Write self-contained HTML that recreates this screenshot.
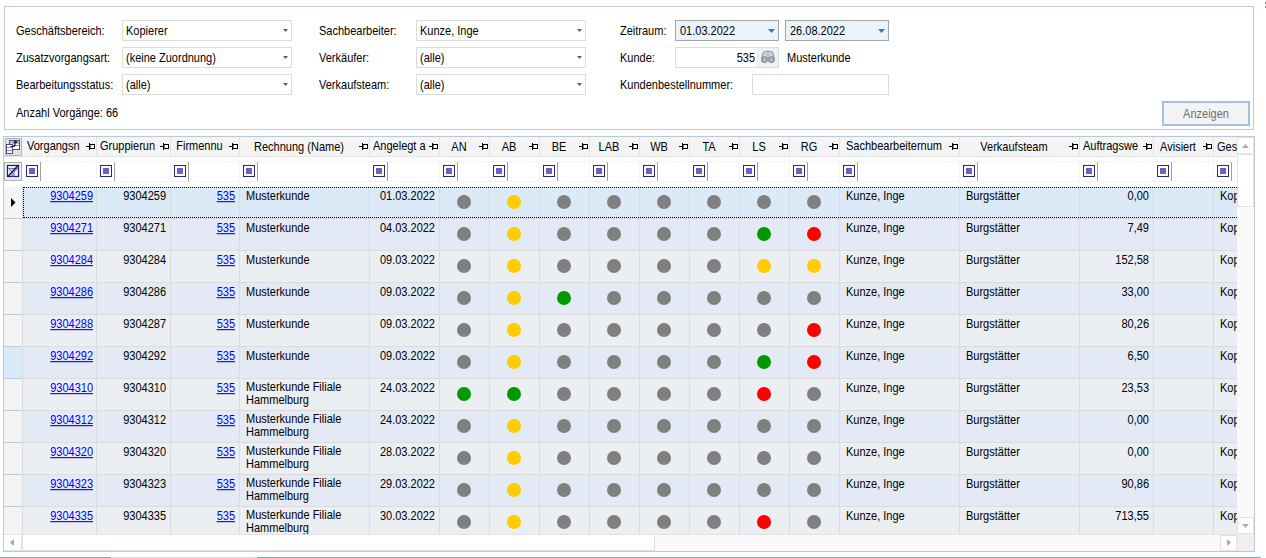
<!DOCTYPE html><html><head><meta charset="utf-8"><style>
html,body{margin:0;padding:0;}
body{width:1266px;height:558px;overflow:hidden;position:relative;background:#fff;font-family:"Liberation Sans", sans-serif;font-size:11px;color:#000;}
div{position:absolute;box-sizing:border-box;}
.t{white-space:nowrap;line-height:13px;transform:scaleY(1.1);transform-origin:0 10px;}
.r{text-align:right;}
a{color:#0000ff;text-decoration:underline;}

</style></head><body>
<div style="left:4px;top:6px;width:1250px;height:124px;border:1px solid #bccadb;"></div>
<div class="t" style="left:16px;top:25px;">Geschäftsbereich:</div>
<div style="left:122px;top:20px;width:170px;height:21px;border:1px solid #dcdcdc;background:#fff;"></div>
<div class="t" style="left:126px;top:25px;">Kopierer</div>
<svg style="position:absolute;left:283px;top:29px" width="5" height="3"><path d="M0 0H5L2.5 3Z" fill="#606060"/></svg>
<div class="t" style="left:16px;top:52px;">Zusatzvorgangsart:</div>
<div style="left:122px;top:47px;width:170px;height:21px;border:1px solid #dcdcdc;background:#fff;"></div>
<div class="t" style="left:126px;top:52px;">(keine Zuordnung)</div>
<svg style="position:absolute;left:283px;top:56px" width="5" height="3"><path d="M0 0H5L2.5 3Z" fill="#606060"/></svg>
<div class="t" style="left:16px;top:79px;">Bearbeitungsstatus:</div>
<div style="left:122px;top:74px;width:170px;height:21px;border:1px solid #dcdcdc;background:#fff;"></div>
<div class="t" style="left:126px;top:79px;">(alle)</div>
<svg style="position:absolute;left:283px;top:83px" width="5" height="3"><path d="M0 0H5L2.5 3Z" fill="#606060"/></svg>
<div class="t" style="left:16px;top:107px;">Anzahl Vorgänge: 66</div>
<div class="t" style="left:319px;top:25px;">Sachbearbeiter:</div>
<div style="left:416px;top:20px;width:170px;height:21px;border:1px solid #dcdcdc;background:#fff;"></div>
<div class="t" style="left:420px;top:25px;">Kunze, Inge</div>
<svg style="position:absolute;left:577px;top:29px" width="5" height="3"><path d="M0 0H5L2.5 3Z" fill="#606060"/></svg>
<div class="t" style="left:319px;top:52px;">Verkäufer:</div>
<div style="left:416px;top:47px;width:170px;height:21px;border:1px solid #dcdcdc;background:#fff;"></div>
<div class="t" style="left:420px;top:52px;">(alle)</div>
<svg style="position:absolute;left:577px;top:56px" width="5" height="3"><path d="M0 0H5L2.5 3Z" fill="#606060"/></svg>
<div class="t" style="left:319px;top:79px;">Verkaufsteam:</div>
<div style="left:416px;top:74px;width:170px;height:21px;border:1px solid #dcdcdc;background:#fff;"></div>
<div class="t" style="left:420px;top:79px;">(alle)</div>
<svg style="position:absolute;left:577px;top:83px" width="5" height="3"><path d="M0 0H5L2.5 3Z" fill="#606060"/></svg>
<div class="t" style="left:620px;top:25px;">Zeitraum:</div>
<div style="left:675px;top:20px;width:104px;height:21px;border:1px solid #a5a5a5;background:#eaf2fb;"></div>
<div class="t" style="left:680px;top:25px;">01.03.2022</div>
<svg style="position:absolute;left:768px;top:29px" width="7" height="4"><path d="M0 0H7L3.5 4Z" fill="#4a74b0"/></svg>
<div style="left:785px;top:20px;width:104px;height:21px;border:1px solid #a5a5a5;background:#eaf2fb;"></div>
<div class="t" style="left:790px;top:25px;">26.08.2022</div>
<svg style="position:absolute;left:878px;top:29px" width="7" height="4"><path d="M0 0H7L3.5 4Z" fill="#4a74b0"/></svg>
<div class="t" style="left:620px;top:52px;">Kunde:</div>
<div style="left:675px;top:47px;width:104px;height:21px;border:1px solid #dcdcdc;background:#fff;"></div>
<div style="left:757px;top:48px;width:21px;height:19px;background:#eaf2fb;border-left:1px solid #e3e9f1;"></div>
<div class="t" style="left:700px;top:52px;width:55px;text-align:right;">535</div>
<svg style="position:absolute;left:760px;top:50px" width="16" height="14" viewBox="0 0 16 14">
<path d="M1.8 9 L2.8 3.5 Q3.5 1.5 5.5 1.5 L6.5 1.5 Q8 0.5 9.5 1.5 L10.5 1.5 Q12.5 1.5 13.2 3.5 L14.2 9 Z" fill="#d2d2d2" stroke="#8c8c8c" stroke-width="1"/>
<path d="M8 2.5 V8" stroke="#b0b0b0" stroke-width="1"/>
<circle cx="4.5" cy="9.6" r="2.9" fill="#9fbad2" stroke="#8a8a8a" stroke-width="1.1"/>
<circle cx="11.5" cy="9.6" r="2.9" fill="#9fbad2" stroke="#8a8a8a" stroke-width="1.1"/>
</svg>
<div class="t" style="left:787px;top:52px;">Musterkunde</div>
<div class="t" style="left:620px;top:79px;">Kundenbestellnummer:</div>
<div style="left:752px;top:74px;width:137px;height:21px;border:1px solid #dcdcdc;background:#fff;"></div>
<div style="left:1162px;top:101px;width:88px;height:25px;border:2px solid #a9bfdd;background:#f3f3f3;"></div>
<div class="t" style="left:1162px;top:108px;width:88px;text-align:center;color:#6d6d6d;">Anzeigen</div>
<div style="left:1265px;top:2px;width:1px;height:2px;background:#8a8a8a;"></div>
<div style="left:1265px;top:6px;width:1px;height:2px;background:#8a8a8a;"></div>
<div style="left:3px;top:136px;width:1252px;height:416px;border:1px solid #b9c9dc;background:#fff;"></div>
<div style="left:4px;top:137px;width:1233px;height:397px;overflow:hidden;">
<div style="left:0px;top:0px;width:1233px;height:19px;background:#f4f4f4;"></div>
<div style="left:0px;top:19px;width:1233px;height:1px;background:#e6e6e6;"></div>
<div style="left:18px;top:24px;width:1215px;height:1px;background:#f1f5fa;"></div>
<div style="left:18px;top:44px;width:1215px;height:1px;background:#f1f5fa;"></div>
<div style="left:1px;top:1px;width:17px;height:18px;background:#e2e2e2;border:1px solid #b4b4b4;"></div>
<div style="left:0px;top:25px;width:18px;height:19px;background:#ececec;border:1px solid #b0b0b0;"></div>
<svg style="position:absolute;left:1px;top:1px" width="18" height="18" viewBox="5 138 18 18" shape-rendering="crispEdges">
<rect x="9" y="140" width="11" height="10" fill="#fff"/>
<rect x="10" y="141" width="9" height="3" fill="#c0c0ea"/>
<rect x="9.5" y="140.5" width="10" height="9" fill="none" stroke="#4c4c94"/>
<path d="M10 145.5H19" stroke="#8a8acc"/>
<rect x="6" y="144" width="7" height="10" fill="#fff"/>
<rect x="6.5" y="144.5" width="6" height="9" fill="none" stroke="#4c4c94"/>
<path d="M7 147.5H12M7 150.5H12" stroke="#8a8acc"/>
</svg>
<svg style="position:absolute;left:1px;top:1px" width="18" height="18" viewBox="5 138 18 18">
<path d="M10.5 146.5 H13.5 Q15 146.5 15 144 V142.5" fill="none" stroke="#111" stroke-width="1.2"/>
<path d="M13 143 L15.5 140 L18 143 Z" fill="#222"/>
</svg>
<svg style="position:absolute;left:0px;top:25px" width="20" height="20" viewBox="4 162 20 20">
<rect x="7.5" y="165.5" width="11" height="11" fill="#f3f3e6" stroke="#1e1e6e" stroke-width="1.2"/>
<path d="M8.5 168.5 H17.5 L14 172 V176 H12 V172 Z" fill="#d6d6f6" stroke="#6a6ad8" stroke-width="1"/>
<path d="M8 176.5 L18.5 165" stroke="#15154a" stroke-width="1.4"/>
</svg>
<div style="left:92px;top:0px;width:1px;height:19px;background:#e3e3e3;"></div>
<svg style="position:absolute;left:82px;top:6px" width="9" height="7"><path d="M0 3.5H3.5" stroke="#000" stroke-width="1"/><path d="M3.5 0V7" stroke="#000" stroke-width="1"/><rect x="4" y="1.5" width="4.5" height="4" fill="#fff" stroke="#000" stroke-width="1"/></svg>
<div class="t" style="left:23px;top:3px;width:59px;overflow:hidden;">Vorgangsn</div>
<div style="left:22px;top:28px;width:12px;height:12px;border:1px solid #2b2b6e;background:#fff;"><div style="left:2px;top:2px;width:6px;height:6px;background:#6464cc;"></div></div>
<div style="left:36px;top:25px;width:1px;height:19px;background:#a0a0a0;"></div>
<div style="left:92px;top:24px;width:1px;height:21px;background:#f1f5fa;"></div>
<div style="left:166px;top:0px;width:1px;height:19px;background:#e3e3e3;"></div>
<svg style="position:absolute;left:156px;top:6px" width="9" height="7"><path d="M0 3.5H3.5" stroke="#000" stroke-width="1"/><path d="M3.5 0V7" stroke="#000" stroke-width="1"/><rect x="4" y="1.5" width="4.5" height="4" fill="#fff" stroke="#000" stroke-width="1"/></svg>
<div class="t" style="left:96px;top:3px;width:60px;overflow:hidden;">Gruppierun</div>
<div style="left:96px;top:28px;width:12px;height:12px;border:1px solid #2b2b6e;background:#fff;"><div style="left:2px;top:2px;width:6px;height:6px;background:#6464cc;"></div></div>
<div style="left:110px;top:25px;width:1px;height:19px;background:#a0a0a0;"></div>
<div style="left:166px;top:24px;width:1px;height:21px;background:#f1f5fa;"></div>
<div style="left:235px;top:0px;width:1px;height:19px;background:#e3e3e3;"></div>
<svg style="position:absolute;left:225px;top:6px" width="9" height="7"><path d="M0 3.5H3.5" stroke="#000" stroke-width="1"/><path d="M3.5 0V7" stroke="#000" stroke-width="1"/><rect x="4" y="1.5" width="4.5" height="4" fill="#fff" stroke="#000" stroke-width="1"/></svg>
<div class="t" style="left:166px;top:3px;width:59px;text-align:center;overflow:hidden;">Firmennu</div>
<div style="left:170px;top:28px;width:12px;height:12px;border:1px solid #2b2b6e;background:#fff;"><div style="left:2px;top:2px;width:6px;height:6px;background:#6464cc;"></div></div>
<div style="left:184px;top:25px;width:1px;height:19px;background:#a0a0a0;"></div>
<div style="left:235px;top:24px;width:1px;height:21px;background:#f1f5fa;"></div>
<div style="left:365px;top:0px;width:1px;height:19px;background:#e3e3e3;"></div>
<svg style="position:absolute;left:355px;top:6px" width="9" height="7"><path d="M0 3.5H3.5" stroke="#000" stroke-width="1"/><path d="M3.5 0V7" stroke="#000" stroke-width="1"/><rect x="4" y="1.5" width="4.5" height="4" fill="#fff" stroke="#000" stroke-width="1"/></svg>
<div class="t" style="left:235px;top:4px;width:120px;text-align:center;overflow:hidden;">Rechnung (Name)</div>
<div style="left:239px;top:28px;width:12px;height:12px;border:1px solid #2b2b6e;background:#fff;"><div style="left:2px;top:2px;width:6px;height:6px;background:#6464cc;"></div></div>
<div style="left:253px;top:25px;width:1px;height:19px;background:#a0a0a0;"></div>
<div style="left:365px;top:24px;width:1px;height:21px;background:#f1f5fa;"></div>
<div style="left:435px;top:0px;width:1px;height:19px;background:#e3e3e3;"></div>
<svg style="position:absolute;left:425px;top:6px" width="9" height="7"><path d="M0 3.5H3.5" stroke="#000" stroke-width="1"/><path d="M3.5 0V7" stroke="#000" stroke-width="1"/><rect x="4" y="1.5" width="4.5" height="4" fill="#fff" stroke="#000" stroke-width="1"/></svg>
<div class="t" style="left:369px;top:3px;width:56px;overflow:hidden;">Angelegt a</div>
<div style="left:369px;top:28px;width:12px;height:12px;border:1px solid #2b2b6e;background:#fff;"><div style="left:2px;top:2px;width:6px;height:6px;background:#6464cc;"></div></div>
<div style="left:383px;top:25px;width:1px;height:19px;background:#a0a0a0;"></div>
<div style="left:435px;top:24px;width:1px;height:21px;background:#f1f5fa;"></div>
<div style="left:485px;top:0px;width:1px;height:19px;background:#e3e3e3;"></div>
<svg style="position:absolute;left:475px;top:6px" width="9" height="7"><path d="M0 3.5H3.5" stroke="#000" stroke-width="1"/><path d="M3.5 0V7" stroke="#000" stroke-width="1"/><rect x="4" y="1.5" width="4.5" height="4" fill="#fff" stroke="#000" stroke-width="1"/></svg>
<div class="t" style="left:435px;top:4px;width:40px;text-align:center;overflow:hidden;">AN</div>
<div style="left:439px;top:28px;width:12px;height:12px;border:1px solid #2b2b6e;background:#fff;"><div style="left:2px;top:2px;width:6px;height:6px;background:#6464cc;"></div></div>
<div style="left:453px;top:25px;width:1px;height:19px;background:#a0a0a0;"></div>
<div style="left:485px;top:24px;width:1px;height:21px;background:#f1f5fa;"></div>
<div style="left:535px;top:0px;width:1px;height:19px;background:#e3e3e3;"></div>
<svg style="position:absolute;left:525px;top:6px" width="9" height="7"><path d="M0 3.5H3.5" stroke="#000" stroke-width="1"/><path d="M3.5 0V7" stroke="#000" stroke-width="1"/><rect x="4" y="1.5" width="4.5" height="4" fill="#fff" stroke="#000" stroke-width="1"/></svg>
<div class="t" style="left:485px;top:4px;width:40px;text-align:center;overflow:hidden;">AB</div>
<div style="left:489px;top:28px;width:12px;height:12px;border:1px solid #2b2b6e;background:#fff;"><div style="left:2px;top:2px;width:6px;height:6px;background:#6464cc;"></div></div>
<div style="left:503px;top:25px;width:1px;height:19px;background:#a0a0a0;"></div>
<div style="left:535px;top:24px;width:1px;height:21px;background:#f1f5fa;"></div>
<div style="left:585px;top:0px;width:1px;height:19px;background:#e3e3e3;"></div>
<svg style="position:absolute;left:575px;top:6px" width="9" height="7"><path d="M0 3.5H3.5" stroke="#000" stroke-width="1"/><path d="M3.5 0V7" stroke="#000" stroke-width="1"/><rect x="4" y="1.5" width="4.5" height="4" fill="#fff" stroke="#000" stroke-width="1"/></svg>
<div class="t" style="left:535px;top:4px;width:40px;text-align:center;overflow:hidden;">BE</div>
<div style="left:539px;top:28px;width:12px;height:12px;border:1px solid #2b2b6e;background:#fff;"><div style="left:2px;top:2px;width:6px;height:6px;background:#6464cc;"></div></div>
<div style="left:553px;top:25px;width:1px;height:19px;background:#a0a0a0;"></div>
<div style="left:585px;top:24px;width:1px;height:21px;background:#f1f5fa;"></div>
<div style="left:635px;top:0px;width:1px;height:19px;background:#e3e3e3;"></div>
<svg style="position:absolute;left:625px;top:6px" width="9" height="7"><path d="M0 3.5H3.5" stroke="#000" stroke-width="1"/><path d="M3.5 0V7" stroke="#000" stroke-width="1"/><rect x="4" y="1.5" width="4.5" height="4" fill="#fff" stroke="#000" stroke-width="1"/></svg>
<div class="t" style="left:585px;top:4px;width:40px;text-align:center;overflow:hidden;">LAB</div>
<div style="left:589px;top:28px;width:12px;height:12px;border:1px solid #2b2b6e;background:#fff;"><div style="left:2px;top:2px;width:6px;height:6px;background:#6464cc;"></div></div>
<div style="left:603px;top:25px;width:1px;height:19px;background:#a0a0a0;"></div>
<div style="left:635px;top:24px;width:1px;height:21px;background:#f1f5fa;"></div>
<div style="left:685px;top:0px;width:1px;height:19px;background:#e3e3e3;"></div>
<svg style="position:absolute;left:675px;top:6px" width="9" height="7"><path d="M0 3.5H3.5" stroke="#000" stroke-width="1"/><path d="M3.5 0V7" stroke="#000" stroke-width="1"/><rect x="4" y="1.5" width="4.5" height="4" fill="#fff" stroke="#000" stroke-width="1"/></svg>
<div class="t" style="left:635px;top:4px;width:40px;text-align:center;overflow:hidden;">WB</div>
<div style="left:639px;top:28px;width:12px;height:12px;border:1px solid #2b2b6e;background:#fff;"><div style="left:2px;top:2px;width:6px;height:6px;background:#6464cc;"></div></div>
<div style="left:653px;top:25px;width:1px;height:19px;background:#a0a0a0;"></div>
<div style="left:685px;top:24px;width:1px;height:21px;background:#f1f5fa;"></div>
<div style="left:735px;top:0px;width:1px;height:19px;background:#e3e3e3;"></div>
<svg style="position:absolute;left:725px;top:6px" width="9" height="7"><path d="M0 3.5H3.5" stroke="#000" stroke-width="1"/><path d="M3.5 0V7" stroke="#000" stroke-width="1"/><rect x="4" y="1.5" width="4.5" height="4" fill="#fff" stroke="#000" stroke-width="1"/></svg>
<div class="t" style="left:685px;top:4px;width:40px;text-align:center;overflow:hidden;">TA</div>
<div style="left:689px;top:28px;width:12px;height:12px;border:1px solid #2b2b6e;background:#fff;"><div style="left:2px;top:2px;width:6px;height:6px;background:#6464cc;"></div></div>
<div style="left:703px;top:25px;width:1px;height:19px;background:#a0a0a0;"></div>
<div style="left:735px;top:24px;width:1px;height:21px;background:#f1f5fa;"></div>
<div style="left:785px;top:0px;width:1px;height:19px;background:#e3e3e3;"></div>
<svg style="position:absolute;left:775px;top:6px" width="9" height="7"><path d="M0 3.5H3.5" stroke="#000" stroke-width="1"/><path d="M3.5 0V7" stroke="#000" stroke-width="1"/><rect x="4" y="1.5" width="4.5" height="4" fill="#fff" stroke="#000" stroke-width="1"/></svg>
<div class="t" style="left:735px;top:4px;width:40px;text-align:center;overflow:hidden;">LS</div>
<div style="left:739px;top:28px;width:12px;height:12px;border:1px solid #2b2b6e;background:#fff;"><div style="left:2px;top:2px;width:6px;height:6px;background:#6464cc;"></div></div>
<div style="left:753px;top:25px;width:1px;height:19px;background:#a0a0a0;"></div>
<div style="left:785px;top:24px;width:1px;height:21px;background:#f1f5fa;"></div>
<div style="left:835px;top:0px;width:1px;height:19px;background:#e3e3e3;"></div>
<svg style="position:absolute;left:825px;top:6px" width="9" height="7"><path d="M0 3.5H3.5" stroke="#000" stroke-width="1"/><path d="M3.5 0V7" stroke="#000" stroke-width="1"/><rect x="4" y="1.5" width="4.5" height="4" fill="#fff" stroke="#000" stroke-width="1"/></svg>
<div class="t" style="left:785px;top:4px;width:40px;text-align:center;overflow:hidden;">RG</div>
<div style="left:789px;top:28px;width:12px;height:12px;border:1px solid #2b2b6e;background:#fff;"><div style="left:2px;top:2px;width:6px;height:6px;background:#6464cc;"></div></div>
<div style="left:803px;top:25px;width:1px;height:19px;background:#a0a0a0;"></div>
<div style="left:835px;top:24px;width:1px;height:21px;background:#f1f5fa;"></div>
<div style="left:955px;top:0px;width:1px;height:19px;background:#e3e3e3;"></div>
<svg style="position:absolute;left:945px;top:6px" width="9" height="7"><path d="M0 3.5H3.5" stroke="#000" stroke-width="1"/><path d="M3.5 0V7" stroke="#000" stroke-width="1"/><rect x="4" y="1.5" width="4.5" height="4" fill="#fff" stroke="#000" stroke-width="1"/></svg>
<div class="t" style="left:835px;top:3px;width:110px;text-align:center;overflow:hidden;">Sachbearbeiternum</div>
<div style="left:839px;top:28px;width:12px;height:12px;border:1px solid #2b2b6e;background:#fff;"><div style="left:2px;top:2px;width:6px;height:6px;background:#6464cc;"></div></div>
<div style="left:853px;top:25px;width:1px;height:19px;background:#a0a0a0;"></div>
<div style="left:955px;top:24px;width:1px;height:21px;background:#f1f5fa;"></div>
<div style="left:1075px;top:0px;width:1px;height:19px;background:#e3e3e3;"></div>
<svg style="position:absolute;left:1065px;top:6px" width="9" height="7"><path d="M0 3.5H3.5" stroke="#000" stroke-width="1"/><path d="M3.5 0V7" stroke="#000" stroke-width="1"/><rect x="4" y="1.5" width="4.5" height="4" fill="#fff" stroke="#000" stroke-width="1"/></svg>
<div class="t" style="left:955px;top:4px;width:110px;text-align:center;overflow:hidden;">Verkaufsteam</div>
<div style="left:959px;top:28px;width:12px;height:12px;border:1px solid #2b2b6e;background:#fff;"><div style="left:2px;top:2px;width:6px;height:6px;background:#6464cc;"></div></div>
<div style="left:973px;top:25px;width:1px;height:19px;background:#a0a0a0;"></div>
<div style="left:1075px;top:24px;width:1px;height:21px;background:#f1f5fa;"></div>
<div style="left:1149px;top:0px;width:1px;height:19px;background:#e3e3e3;"></div>
<svg style="position:absolute;left:1139px;top:6px" width="9" height="7"><path d="M0 3.5H3.5" stroke="#000" stroke-width="1"/><path d="M3.5 0V7" stroke="#000" stroke-width="1"/><rect x="4" y="1.5" width="4.5" height="4" fill="#fff" stroke="#000" stroke-width="1"/></svg>
<div class="t" style="left:1079px;top:3px;width:60px;overflow:hidden;">Auftragswe</div>
<div style="left:1079px;top:28px;width:12px;height:12px;border:1px solid #2b2b6e;background:#fff;"><div style="left:2px;top:2px;width:6px;height:6px;background:#6464cc;"></div></div>
<div style="left:1093px;top:25px;width:1px;height:19px;background:#a0a0a0;"></div>
<div style="left:1149px;top:24px;width:1px;height:21px;background:#f1f5fa;"></div>
<div style="left:1209px;top:0px;width:1px;height:19px;background:#e3e3e3;"></div>
<svg style="position:absolute;left:1199px;top:6px" width="9" height="7"><path d="M0 3.5H3.5" stroke="#000" stroke-width="1"/><path d="M3.5 0V7" stroke="#000" stroke-width="1"/><rect x="4" y="1.5" width="4.5" height="4" fill="#fff" stroke="#000" stroke-width="1"/></svg>
<div class="t" style="left:1149px;top:4px;width:50px;text-align:center;overflow:hidden;">Avisiert</div>
<div style="left:1153px;top:28px;width:12px;height:12px;border:1px solid #2b2b6e;background:#fff;"><div style="left:2px;top:2px;width:6px;height:6px;background:#6464cc;"></div></div>
<div style="left:1167px;top:25px;width:1px;height:19px;background:#a0a0a0;"></div>
<div style="left:1209px;top:24px;width:1px;height:21px;background:#f1f5fa;"></div>
<div style="left:1286px;top:0px;width:1px;height:19px;background:#e3e3e3;"></div>
<svg style="position:absolute;left:1276px;top:6px" width="9" height="7"><path d="M0 3.5H3.5" stroke="#000" stroke-width="1"/><path d="M3.5 0V7" stroke="#000" stroke-width="1"/><rect x="4" y="1.5" width="4.5" height="4" fill="#fff" stroke="#000" stroke-width="1"/></svg>
<div class="t" style="left:1213px;top:4px;width:63px;overflow:hidden;">Ges</div>
<div style="left:1213px;top:28px;width:12px;height:12px;border:1px solid #2b2b6e;background:#fff;"><div style="left:2px;top:2px;width:6px;height:6px;background:#6464cc;"></div></div>
<div style="left:1227px;top:25px;width:1px;height:19px;background:#a0a0a0;"></div>
<div style="left:1286px;top:24px;width:1px;height:21px;background:#f1f5fa;"></div>
<div style="left:18px;top:50px;width:1215px;height:31px;background:#dceaf8;"></div>
<div style="left:0px;top:50px;width:18px;height:31px;background:#f4f4f4;"></div>
<div style="left:0px;top:81px;width:18px;height:1px;background:#bccbdf;"></div>
<div style="left:18px;top:50px;width:1px;height:31px;background:#dcdcdc;"></div>
<div style="left:18px;top:81px;width:1215px;height:1px;background:#dcdcdc;"></div>
<div style="left:92px;top:50px;width:1px;height:31px;background:#dcdcdc;"></div>
<div style="left:166px;top:50px;width:1px;height:31px;background:#dcdcdc;"></div>
<div style="left:235px;top:50px;width:1px;height:31px;background:#dcdcdc;"></div>
<div style="left:365px;top:50px;width:1px;height:31px;background:#dcdcdc;"></div>
<div style="left:435px;top:50px;width:1px;height:31px;background:#dcdcdc;"></div>
<div style="left:485px;top:50px;width:1px;height:31px;background:#dcdcdc;"></div>
<div style="left:535px;top:50px;width:1px;height:31px;background:#dcdcdc;"></div>
<div style="left:585px;top:50px;width:1px;height:31px;background:#dcdcdc;"></div>
<div style="left:635px;top:50px;width:1px;height:31px;background:#dcdcdc;"></div>
<div style="left:685px;top:50px;width:1px;height:31px;background:#dcdcdc;"></div>
<div style="left:735px;top:50px;width:1px;height:31px;background:#dcdcdc;"></div>
<div style="left:785px;top:50px;width:1px;height:31px;background:#dcdcdc;"></div>
<div style="left:835px;top:50px;width:1px;height:31px;background:#dcdcdc;"></div>
<div style="left:955px;top:50px;width:1px;height:31px;background:#dcdcdc;"></div>
<div style="left:1075px;top:50px;width:1px;height:31px;background:#dcdcdc;"></div>
<div style="left:1149px;top:50px;width:1px;height:31px;background:#dcdcdc;"></div>
<div style="left:1209px;top:50px;width:1px;height:31px;background:#dcdcdc;"></div>
<div style="left:1286px;top:50px;width:1px;height:31px;background:#dcdcdc;"></div>
<div class="t" style="left:18px;top:53px;width:71px;text-align:right;"><a>9304259</a></div>
<div class="t" style="left:92px;top:53px;width:70px;text-align:right;">9304259</div>
<div class="t" style="left:166px;top:53px;width:65px;text-align:right;"><a>535</a></div>
<div class="t" style="left:242px;top:53px;">Musterkunde</div>
<div class="t" style="left:365px;top:53px;width:66px;text-align:right;">01.03.2022</div>
<div style="left:453px;top:58px;width:14px;height:14px;background:#7f7f7f;border-radius:50%;"></div>
<div style="left:459px;top:68px;width:2px;height:1px;background:#9a9a9a;"></div>
<div style="left:503px;top:58px;width:14px;height:14px;background:#ffcc00;border-radius:50%;"></div>
<div style="left:553px;top:58px;width:14px;height:14px;background:#7f7f7f;border-radius:50%;"></div>
<div style="left:559px;top:68px;width:2px;height:1px;background:#9a9a9a;"></div>
<div style="left:603px;top:58px;width:14px;height:14px;background:#7f7f7f;border-radius:50%;"></div>
<div style="left:609px;top:68px;width:2px;height:1px;background:#9a9a9a;"></div>
<div style="left:653px;top:58px;width:14px;height:14px;background:#7f7f7f;border-radius:50%;"></div>
<div style="left:659px;top:68px;width:2px;height:1px;background:#9a9a9a;"></div>
<div style="left:703px;top:58px;width:14px;height:14px;background:#7f7f7f;border-radius:50%;"></div>
<div style="left:709px;top:68px;width:2px;height:1px;background:#9a9a9a;"></div>
<div style="left:753px;top:58px;width:14px;height:14px;background:#7f7f7f;border-radius:50%;"></div>
<div style="left:759px;top:68px;width:2px;height:1px;background:#9a9a9a;"></div>
<div style="left:803px;top:58px;width:14px;height:14px;background:#7f7f7f;border-radius:50%;"></div>
<div style="left:809px;top:68px;width:2px;height:1px;background:#9a9a9a;"></div>
<div class="t" style="left:842px;top:53px;">Kunze, Inge</div>
<div class="t" style="left:962px;top:53px;">Burgstätter</div>
<div class="t" style="left:1075px;top:53px;width:70px;text-align:right;">0,00</div>
<div class="t" style="left:1216px;top:53px;">Kopierer</div>
<div style="left:19px;top:50px;width:1300px;height:31px;border:1px dotted #000;"></div>
<svg style="position:absolute;left:6px;top:60px" width="8" height="12"><path d="M1 1V10L5.5 5.5Z" fill="#000"/></svg>
<div style="left:18px;top:82px;width:1215px;height:31px;background:#e3eaf6;"></div>
<div style="left:0px;top:82px;width:18px;height:31px;background:#f4f4f4;"></div>
<div style="left:0px;top:113px;width:18px;height:1px;background:#bccbdf;"></div>
<div style="left:18px;top:82px;width:1px;height:31px;background:#dcdcdc;"></div>
<div style="left:18px;top:113px;width:1215px;height:1px;background:#dcdcdc;"></div>
<div style="left:92px;top:82px;width:1px;height:31px;background:#dcdcdc;"></div>
<div style="left:166px;top:82px;width:1px;height:31px;background:#dcdcdc;"></div>
<div style="left:235px;top:82px;width:1px;height:31px;background:#dcdcdc;"></div>
<div style="left:365px;top:82px;width:1px;height:31px;background:#dcdcdc;"></div>
<div style="left:435px;top:82px;width:1px;height:31px;background:#dcdcdc;"></div>
<div style="left:485px;top:82px;width:1px;height:31px;background:#dcdcdc;"></div>
<div style="left:535px;top:82px;width:1px;height:31px;background:#dcdcdc;"></div>
<div style="left:585px;top:82px;width:1px;height:31px;background:#dcdcdc;"></div>
<div style="left:635px;top:82px;width:1px;height:31px;background:#dcdcdc;"></div>
<div style="left:685px;top:82px;width:1px;height:31px;background:#dcdcdc;"></div>
<div style="left:735px;top:82px;width:1px;height:31px;background:#dcdcdc;"></div>
<div style="left:785px;top:82px;width:1px;height:31px;background:#dcdcdc;"></div>
<div style="left:835px;top:82px;width:1px;height:31px;background:#dcdcdc;"></div>
<div style="left:955px;top:82px;width:1px;height:31px;background:#dcdcdc;"></div>
<div style="left:1075px;top:82px;width:1px;height:31px;background:#dcdcdc;"></div>
<div style="left:1149px;top:82px;width:1px;height:31px;background:#dcdcdc;"></div>
<div style="left:1209px;top:82px;width:1px;height:31px;background:#dcdcdc;"></div>
<div style="left:1286px;top:82px;width:1px;height:31px;background:#dcdcdc;"></div>
<div class="t" style="left:18px;top:85px;width:71px;text-align:right;"><a>9304271</a></div>
<div class="t" style="left:92px;top:85px;width:70px;text-align:right;">9304271</div>
<div class="t" style="left:166px;top:85px;width:65px;text-align:right;"><a>535</a></div>
<div class="t" style="left:242px;top:85px;">Musterkunde</div>
<div class="t" style="left:365px;top:85px;width:66px;text-align:right;">04.03.2022</div>
<div style="left:453px;top:90px;width:14px;height:14px;background:#7f7f7f;border-radius:50%;"></div>
<div style="left:459px;top:100px;width:2px;height:1px;background:#9a9a9a;"></div>
<div style="left:503px;top:90px;width:14px;height:14px;background:#ffcc00;border-radius:50%;"></div>
<div style="left:553px;top:90px;width:14px;height:14px;background:#7f7f7f;border-radius:50%;"></div>
<div style="left:559px;top:100px;width:2px;height:1px;background:#9a9a9a;"></div>
<div style="left:603px;top:90px;width:14px;height:14px;background:#7f7f7f;border-radius:50%;"></div>
<div style="left:609px;top:100px;width:2px;height:1px;background:#9a9a9a;"></div>
<div style="left:653px;top:90px;width:14px;height:14px;background:#7f7f7f;border-radius:50%;"></div>
<div style="left:659px;top:100px;width:2px;height:1px;background:#9a9a9a;"></div>
<div style="left:703px;top:90px;width:14px;height:14px;background:#7f7f7f;border-radius:50%;"></div>
<div style="left:709px;top:100px;width:2px;height:1px;background:#9a9a9a;"></div>
<div style="left:753px;top:90px;width:14px;height:14px;background:#009900;border-radius:50%;"></div>
<div style="left:803px;top:90px;width:14px;height:14px;background:#ff0000;border-radius:50%;"></div>
<div class="t" style="left:842px;top:85px;">Kunze, Inge</div>
<div class="t" style="left:962px;top:85px;">Burgstätter</div>
<div class="t" style="left:1075px;top:85px;width:70px;text-align:right;">7,49</div>
<div class="t" style="left:1216px;top:85px;">Kopierer</div>
<div style="left:18px;top:114px;width:1215px;height:31px;background:#ebeef2;"></div>
<div style="left:0px;top:114px;width:18px;height:31px;background:#f4f4f4;"></div>
<div style="left:0px;top:145px;width:18px;height:1px;background:#bccbdf;"></div>
<div style="left:18px;top:114px;width:1px;height:31px;background:#dcdcdc;"></div>
<div style="left:18px;top:145px;width:1215px;height:1px;background:#dcdcdc;"></div>
<div style="left:92px;top:114px;width:1px;height:31px;background:#dcdcdc;"></div>
<div style="left:166px;top:114px;width:1px;height:31px;background:#dcdcdc;"></div>
<div style="left:235px;top:114px;width:1px;height:31px;background:#dcdcdc;"></div>
<div style="left:365px;top:114px;width:1px;height:31px;background:#dcdcdc;"></div>
<div style="left:435px;top:114px;width:1px;height:31px;background:#dcdcdc;"></div>
<div style="left:485px;top:114px;width:1px;height:31px;background:#dcdcdc;"></div>
<div style="left:535px;top:114px;width:1px;height:31px;background:#dcdcdc;"></div>
<div style="left:585px;top:114px;width:1px;height:31px;background:#dcdcdc;"></div>
<div style="left:635px;top:114px;width:1px;height:31px;background:#dcdcdc;"></div>
<div style="left:685px;top:114px;width:1px;height:31px;background:#dcdcdc;"></div>
<div style="left:735px;top:114px;width:1px;height:31px;background:#dcdcdc;"></div>
<div style="left:785px;top:114px;width:1px;height:31px;background:#dcdcdc;"></div>
<div style="left:835px;top:114px;width:1px;height:31px;background:#dcdcdc;"></div>
<div style="left:955px;top:114px;width:1px;height:31px;background:#dcdcdc;"></div>
<div style="left:1075px;top:114px;width:1px;height:31px;background:#dcdcdc;"></div>
<div style="left:1149px;top:114px;width:1px;height:31px;background:#dcdcdc;"></div>
<div style="left:1209px;top:114px;width:1px;height:31px;background:#dcdcdc;"></div>
<div style="left:1286px;top:114px;width:1px;height:31px;background:#dcdcdc;"></div>
<div class="t" style="left:18px;top:117px;width:71px;text-align:right;"><a>9304284</a></div>
<div class="t" style="left:92px;top:117px;width:70px;text-align:right;">9304284</div>
<div class="t" style="left:166px;top:117px;width:65px;text-align:right;"><a>535</a></div>
<div class="t" style="left:242px;top:117px;">Musterkunde</div>
<div class="t" style="left:365px;top:117px;width:66px;text-align:right;">09.03.2022</div>
<div style="left:453px;top:122px;width:14px;height:14px;background:#7f7f7f;border-radius:50%;"></div>
<div style="left:459px;top:132px;width:2px;height:1px;background:#9a9a9a;"></div>
<div style="left:503px;top:122px;width:14px;height:14px;background:#ffcc00;border-radius:50%;"></div>
<div style="left:553px;top:122px;width:14px;height:14px;background:#7f7f7f;border-radius:50%;"></div>
<div style="left:559px;top:132px;width:2px;height:1px;background:#9a9a9a;"></div>
<div style="left:603px;top:122px;width:14px;height:14px;background:#7f7f7f;border-radius:50%;"></div>
<div style="left:609px;top:132px;width:2px;height:1px;background:#9a9a9a;"></div>
<div style="left:653px;top:122px;width:14px;height:14px;background:#7f7f7f;border-radius:50%;"></div>
<div style="left:659px;top:132px;width:2px;height:1px;background:#9a9a9a;"></div>
<div style="left:703px;top:122px;width:14px;height:14px;background:#7f7f7f;border-radius:50%;"></div>
<div style="left:709px;top:132px;width:2px;height:1px;background:#9a9a9a;"></div>
<div style="left:753px;top:122px;width:14px;height:14px;background:#ffcc00;border-radius:50%;"></div>
<div style="left:803px;top:122px;width:14px;height:14px;background:#ffcc00;border-radius:50%;"></div>
<div class="t" style="left:842px;top:117px;">Kunze, Inge</div>
<div class="t" style="left:962px;top:117px;">Burgstätter</div>
<div class="t" style="left:1075px;top:117px;width:70px;text-align:right;">152,58</div>
<div class="t" style="left:1216px;top:117px;">Kopierer</div>
<div style="left:18px;top:146px;width:1215px;height:31px;background:#e3eaf6;"></div>
<div style="left:0px;top:146px;width:18px;height:31px;background:#f4f4f4;"></div>
<div style="left:0px;top:177px;width:18px;height:1px;background:#bccbdf;"></div>
<div style="left:18px;top:146px;width:1px;height:31px;background:#dcdcdc;"></div>
<div style="left:18px;top:177px;width:1215px;height:1px;background:#dcdcdc;"></div>
<div style="left:92px;top:146px;width:1px;height:31px;background:#dcdcdc;"></div>
<div style="left:166px;top:146px;width:1px;height:31px;background:#dcdcdc;"></div>
<div style="left:235px;top:146px;width:1px;height:31px;background:#dcdcdc;"></div>
<div style="left:365px;top:146px;width:1px;height:31px;background:#dcdcdc;"></div>
<div style="left:435px;top:146px;width:1px;height:31px;background:#dcdcdc;"></div>
<div style="left:485px;top:146px;width:1px;height:31px;background:#dcdcdc;"></div>
<div style="left:535px;top:146px;width:1px;height:31px;background:#dcdcdc;"></div>
<div style="left:585px;top:146px;width:1px;height:31px;background:#dcdcdc;"></div>
<div style="left:635px;top:146px;width:1px;height:31px;background:#dcdcdc;"></div>
<div style="left:685px;top:146px;width:1px;height:31px;background:#dcdcdc;"></div>
<div style="left:735px;top:146px;width:1px;height:31px;background:#dcdcdc;"></div>
<div style="left:785px;top:146px;width:1px;height:31px;background:#dcdcdc;"></div>
<div style="left:835px;top:146px;width:1px;height:31px;background:#dcdcdc;"></div>
<div style="left:955px;top:146px;width:1px;height:31px;background:#dcdcdc;"></div>
<div style="left:1075px;top:146px;width:1px;height:31px;background:#dcdcdc;"></div>
<div style="left:1149px;top:146px;width:1px;height:31px;background:#dcdcdc;"></div>
<div style="left:1209px;top:146px;width:1px;height:31px;background:#dcdcdc;"></div>
<div style="left:1286px;top:146px;width:1px;height:31px;background:#dcdcdc;"></div>
<div class="t" style="left:18px;top:149px;width:71px;text-align:right;"><a>9304286</a></div>
<div class="t" style="left:92px;top:149px;width:70px;text-align:right;">9304286</div>
<div class="t" style="left:166px;top:149px;width:65px;text-align:right;"><a>535</a></div>
<div class="t" style="left:242px;top:149px;">Musterkunde</div>
<div class="t" style="left:365px;top:149px;width:66px;text-align:right;">09.03.2022</div>
<div style="left:453px;top:154px;width:14px;height:14px;background:#7f7f7f;border-radius:50%;"></div>
<div style="left:459px;top:164px;width:2px;height:1px;background:#9a9a9a;"></div>
<div style="left:503px;top:154px;width:14px;height:14px;background:#ffcc00;border-radius:50%;"></div>
<div style="left:553px;top:154px;width:14px;height:14px;background:#009900;border-radius:50%;"></div>
<div style="left:603px;top:154px;width:14px;height:14px;background:#7f7f7f;border-radius:50%;"></div>
<div style="left:609px;top:164px;width:2px;height:1px;background:#9a9a9a;"></div>
<div style="left:653px;top:154px;width:14px;height:14px;background:#7f7f7f;border-radius:50%;"></div>
<div style="left:659px;top:164px;width:2px;height:1px;background:#9a9a9a;"></div>
<div style="left:703px;top:154px;width:14px;height:14px;background:#7f7f7f;border-radius:50%;"></div>
<div style="left:709px;top:164px;width:2px;height:1px;background:#9a9a9a;"></div>
<div style="left:753px;top:154px;width:14px;height:14px;background:#7f7f7f;border-radius:50%;"></div>
<div style="left:759px;top:164px;width:2px;height:1px;background:#9a9a9a;"></div>
<div style="left:803px;top:154px;width:14px;height:14px;background:#7f7f7f;border-radius:50%;"></div>
<div style="left:809px;top:164px;width:2px;height:1px;background:#9a9a9a;"></div>
<div class="t" style="left:842px;top:149px;">Kunze, Inge</div>
<div class="t" style="left:962px;top:149px;">Burgstätter</div>
<div class="t" style="left:1075px;top:149px;width:70px;text-align:right;">33,00</div>
<div class="t" style="left:1216px;top:149px;">Kopierer</div>
<div style="left:18px;top:178px;width:1215px;height:31px;background:#ebeef2;"></div>
<div style="left:0px;top:178px;width:18px;height:31px;background:#f4f4f4;"></div>
<div style="left:0px;top:209px;width:18px;height:1px;background:#bccbdf;"></div>
<div style="left:18px;top:178px;width:1px;height:31px;background:#dcdcdc;"></div>
<div style="left:18px;top:209px;width:1215px;height:1px;background:#dcdcdc;"></div>
<div style="left:92px;top:178px;width:1px;height:31px;background:#dcdcdc;"></div>
<div style="left:166px;top:178px;width:1px;height:31px;background:#dcdcdc;"></div>
<div style="left:235px;top:178px;width:1px;height:31px;background:#dcdcdc;"></div>
<div style="left:365px;top:178px;width:1px;height:31px;background:#dcdcdc;"></div>
<div style="left:435px;top:178px;width:1px;height:31px;background:#dcdcdc;"></div>
<div style="left:485px;top:178px;width:1px;height:31px;background:#dcdcdc;"></div>
<div style="left:535px;top:178px;width:1px;height:31px;background:#dcdcdc;"></div>
<div style="left:585px;top:178px;width:1px;height:31px;background:#dcdcdc;"></div>
<div style="left:635px;top:178px;width:1px;height:31px;background:#dcdcdc;"></div>
<div style="left:685px;top:178px;width:1px;height:31px;background:#dcdcdc;"></div>
<div style="left:735px;top:178px;width:1px;height:31px;background:#dcdcdc;"></div>
<div style="left:785px;top:178px;width:1px;height:31px;background:#dcdcdc;"></div>
<div style="left:835px;top:178px;width:1px;height:31px;background:#dcdcdc;"></div>
<div style="left:955px;top:178px;width:1px;height:31px;background:#dcdcdc;"></div>
<div style="left:1075px;top:178px;width:1px;height:31px;background:#dcdcdc;"></div>
<div style="left:1149px;top:178px;width:1px;height:31px;background:#dcdcdc;"></div>
<div style="left:1209px;top:178px;width:1px;height:31px;background:#dcdcdc;"></div>
<div style="left:1286px;top:178px;width:1px;height:31px;background:#dcdcdc;"></div>
<div class="t" style="left:18px;top:181px;width:71px;text-align:right;"><a>9304288</a></div>
<div class="t" style="left:92px;top:181px;width:70px;text-align:right;">9304287</div>
<div class="t" style="left:166px;top:181px;width:65px;text-align:right;"><a>535</a></div>
<div class="t" style="left:242px;top:181px;">Musterkunde</div>
<div class="t" style="left:365px;top:181px;width:66px;text-align:right;">09.03.2022</div>
<div style="left:453px;top:186px;width:14px;height:14px;background:#7f7f7f;border-radius:50%;"></div>
<div style="left:459px;top:196px;width:2px;height:1px;background:#9a9a9a;"></div>
<div style="left:503px;top:186px;width:14px;height:14px;background:#ffcc00;border-radius:50%;"></div>
<div style="left:553px;top:186px;width:14px;height:14px;background:#7f7f7f;border-radius:50%;"></div>
<div style="left:559px;top:196px;width:2px;height:1px;background:#9a9a9a;"></div>
<div style="left:603px;top:186px;width:14px;height:14px;background:#7f7f7f;border-radius:50%;"></div>
<div style="left:609px;top:196px;width:2px;height:1px;background:#9a9a9a;"></div>
<div style="left:653px;top:186px;width:14px;height:14px;background:#7f7f7f;border-radius:50%;"></div>
<div style="left:659px;top:196px;width:2px;height:1px;background:#9a9a9a;"></div>
<div style="left:703px;top:186px;width:14px;height:14px;background:#7f7f7f;border-radius:50%;"></div>
<div style="left:709px;top:196px;width:2px;height:1px;background:#9a9a9a;"></div>
<div style="left:753px;top:186px;width:14px;height:14px;background:#7f7f7f;border-radius:50%;"></div>
<div style="left:759px;top:196px;width:2px;height:1px;background:#9a9a9a;"></div>
<div style="left:803px;top:186px;width:14px;height:14px;background:#ff0000;border-radius:50%;"></div>
<div class="t" style="left:842px;top:181px;">Kunze, Inge</div>
<div class="t" style="left:962px;top:181px;">Burgstätter</div>
<div class="t" style="left:1075px;top:181px;width:70px;text-align:right;">80,26</div>
<div class="t" style="left:1216px;top:181px;">Kopierer</div>
<div style="left:18px;top:210px;width:1215px;height:31px;background:#e3eaf6;"></div>
<div style="left:0px;top:210px;width:18px;height:31px;background:#dbeafa;"></div>
<div style="left:0px;top:241px;width:18px;height:1px;background:#bccbdf;"></div>
<div style="left:18px;top:210px;width:1px;height:31px;background:#dcdcdc;"></div>
<div style="left:18px;top:241px;width:1215px;height:1px;background:#dcdcdc;"></div>
<div style="left:92px;top:210px;width:1px;height:31px;background:#dcdcdc;"></div>
<div style="left:166px;top:210px;width:1px;height:31px;background:#dcdcdc;"></div>
<div style="left:235px;top:210px;width:1px;height:31px;background:#dcdcdc;"></div>
<div style="left:365px;top:210px;width:1px;height:31px;background:#dcdcdc;"></div>
<div style="left:435px;top:210px;width:1px;height:31px;background:#dcdcdc;"></div>
<div style="left:485px;top:210px;width:1px;height:31px;background:#dcdcdc;"></div>
<div style="left:535px;top:210px;width:1px;height:31px;background:#dcdcdc;"></div>
<div style="left:585px;top:210px;width:1px;height:31px;background:#dcdcdc;"></div>
<div style="left:635px;top:210px;width:1px;height:31px;background:#dcdcdc;"></div>
<div style="left:685px;top:210px;width:1px;height:31px;background:#dcdcdc;"></div>
<div style="left:735px;top:210px;width:1px;height:31px;background:#dcdcdc;"></div>
<div style="left:785px;top:210px;width:1px;height:31px;background:#dcdcdc;"></div>
<div style="left:835px;top:210px;width:1px;height:31px;background:#dcdcdc;"></div>
<div style="left:955px;top:210px;width:1px;height:31px;background:#dcdcdc;"></div>
<div style="left:1075px;top:210px;width:1px;height:31px;background:#dcdcdc;"></div>
<div style="left:1149px;top:210px;width:1px;height:31px;background:#dcdcdc;"></div>
<div style="left:1209px;top:210px;width:1px;height:31px;background:#dcdcdc;"></div>
<div style="left:1286px;top:210px;width:1px;height:31px;background:#dcdcdc;"></div>
<div class="t" style="left:18px;top:213px;width:71px;text-align:right;"><a>9304292</a></div>
<div class="t" style="left:92px;top:213px;width:70px;text-align:right;">9304292</div>
<div class="t" style="left:166px;top:213px;width:65px;text-align:right;"><a>535</a></div>
<div class="t" style="left:242px;top:213px;">Musterkunde</div>
<div class="t" style="left:365px;top:213px;width:66px;text-align:right;">09.03.2022</div>
<div style="left:453px;top:218px;width:14px;height:14px;background:#7f7f7f;border-radius:50%;"></div>
<div style="left:459px;top:228px;width:2px;height:1px;background:#9a9a9a;"></div>
<div style="left:503px;top:218px;width:14px;height:14px;background:#ffcc00;border-radius:50%;"></div>
<div style="left:553px;top:218px;width:14px;height:14px;background:#7f7f7f;border-radius:50%;"></div>
<div style="left:559px;top:228px;width:2px;height:1px;background:#9a9a9a;"></div>
<div style="left:603px;top:218px;width:14px;height:14px;background:#7f7f7f;border-radius:50%;"></div>
<div style="left:609px;top:228px;width:2px;height:1px;background:#9a9a9a;"></div>
<div style="left:653px;top:218px;width:14px;height:14px;background:#7f7f7f;border-radius:50%;"></div>
<div style="left:659px;top:228px;width:2px;height:1px;background:#9a9a9a;"></div>
<div style="left:703px;top:218px;width:14px;height:14px;background:#7f7f7f;border-radius:50%;"></div>
<div style="left:709px;top:228px;width:2px;height:1px;background:#9a9a9a;"></div>
<div style="left:753px;top:218px;width:14px;height:14px;background:#009900;border-radius:50%;"></div>
<div style="left:803px;top:218px;width:14px;height:14px;background:#ff0000;border-radius:50%;"></div>
<div class="t" style="left:842px;top:213px;">Kunze, Inge</div>
<div class="t" style="left:962px;top:213px;">Burgstätter</div>
<div class="t" style="left:1075px;top:213px;width:70px;text-align:right;">6,50</div>
<div class="t" style="left:1216px;top:213px;">Kopierer</div>
<div style="left:18px;top:242px;width:1215px;height:31px;background:#ebeef2;"></div>
<div style="left:0px;top:242px;width:18px;height:31px;background:#f4f4f4;"></div>
<div style="left:0px;top:273px;width:18px;height:1px;background:#bccbdf;"></div>
<div style="left:18px;top:242px;width:1px;height:31px;background:#dcdcdc;"></div>
<div style="left:18px;top:273px;width:1215px;height:1px;background:#dcdcdc;"></div>
<div style="left:92px;top:242px;width:1px;height:31px;background:#dcdcdc;"></div>
<div style="left:166px;top:242px;width:1px;height:31px;background:#dcdcdc;"></div>
<div style="left:235px;top:242px;width:1px;height:31px;background:#dcdcdc;"></div>
<div style="left:365px;top:242px;width:1px;height:31px;background:#dcdcdc;"></div>
<div style="left:435px;top:242px;width:1px;height:31px;background:#dcdcdc;"></div>
<div style="left:485px;top:242px;width:1px;height:31px;background:#dcdcdc;"></div>
<div style="left:535px;top:242px;width:1px;height:31px;background:#dcdcdc;"></div>
<div style="left:585px;top:242px;width:1px;height:31px;background:#dcdcdc;"></div>
<div style="left:635px;top:242px;width:1px;height:31px;background:#dcdcdc;"></div>
<div style="left:685px;top:242px;width:1px;height:31px;background:#dcdcdc;"></div>
<div style="left:735px;top:242px;width:1px;height:31px;background:#dcdcdc;"></div>
<div style="left:785px;top:242px;width:1px;height:31px;background:#dcdcdc;"></div>
<div style="left:835px;top:242px;width:1px;height:31px;background:#dcdcdc;"></div>
<div style="left:955px;top:242px;width:1px;height:31px;background:#dcdcdc;"></div>
<div style="left:1075px;top:242px;width:1px;height:31px;background:#dcdcdc;"></div>
<div style="left:1149px;top:242px;width:1px;height:31px;background:#dcdcdc;"></div>
<div style="left:1209px;top:242px;width:1px;height:31px;background:#dcdcdc;"></div>
<div style="left:1286px;top:242px;width:1px;height:31px;background:#dcdcdc;"></div>
<div class="t" style="left:18px;top:245px;width:71px;text-align:right;"><a>9304310</a></div>
<div class="t" style="left:92px;top:245px;width:70px;text-align:right;">9304310</div>
<div class="t" style="left:166px;top:245px;width:65px;text-align:right;"><a>535</a></div>
<div class="t" style="left:242px;top:244px;">Musterkunde Filiale</div>
<div class="t" style="left:242px;top:257px;">Hammelburg</div>
<div class="t" style="left:365px;top:245px;width:66px;text-align:right;">24.03.2022</div>
<div style="left:453px;top:250px;width:14px;height:14px;background:#009900;border-radius:50%;"></div>
<div style="left:503px;top:250px;width:14px;height:14px;background:#009900;border-radius:50%;"></div>
<div style="left:553px;top:250px;width:14px;height:14px;background:#7f7f7f;border-radius:50%;"></div>
<div style="left:559px;top:260px;width:2px;height:1px;background:#9a9a9a;"></div>
<div style="left:603px;top:250px;width:14px;height:14px;background:#7f7f7f;border-radius:50%;"></div>
<div style="left:609px;top:260px;width:2px;height:1px;background:#9a9a9a;"></div>
<div style="left:653px;top:250px;width:14px;height:14px;background:#7f7f7f;border-radius:50%;"></div>
<div style="left:659px;top:260px;width:2px;height:1px;background:#9a9a9a;"></div>
<div style="left:703px;top:250px;width:14px;height:14px;background:#7f7f7f;border-radius:50%;"></div>
<div style="left:709px;top:260px;width:2px;height:1px;background:#9a9a9a;"></div>
<div style="left:753px;top:250px;width:14px;height:14px;background:#ff0000;border-radius:50%;"></div>
<div style="left:803px;top:250px;width:14px;height:14px;background:#7f7f7f;border-radius:50%;"></div>
<div style="left:809px;top:260px;width:2px;height:1px;background:#9a9a9a;"></div>
<div class="t" style="left:842px;top:245px;">Kunze, Inge</div>
<div class="t" style="left:962px;top:245px;">Burgstätter</div>
<div class="t" style="left:1075px;top:245px;width:70px;text-align:right;">23,53</div>
<div class="t" style="left:1216px;top:245px;">Kopierer</div>
<div style="left:18px;top:274px;width:1215px;height:31px;background:#e3eaf6;"></div>
<div style="left:0px;top:274px;width:18px;height:31px;background:#f4f4f4;"></div>
<div style="left:0px;top:305px;width:18px;height:1px;background:#bccbdf;"></div>
<div style="left:18px;top:274px;width:1px;height:31px;background:#dcdcdc;"></div>
<div style="left:18px;top:305px;width:1215px;height:1px;background:#dcdcdc;"></div>
<div style="left:92px;top:274px;width:1px;height:31px;background:#dcdcdc;"></div>
<div style="left:166px;top:274px;width:1px;height:31px;background:#dcdcdc;"></div>
<div style="left:235px;top:274px;width:1px;height:31px;background:#dcdcdc;"></div>
<div style="left:365px;top:274px;width:1px;height:31px;background:#dcdcdc;"></div>
<div style="left:435px;top:274px;width:1px;height:31px;background:#dcdcdc;"></div>
<div style="left:485px;top:274px;width:1px;height:31px;background:#dcdcdc;"></div>
<div style="left:535px;top:274px;width:1px;height:31px;background:#dcdcdc;"></div>
<div style="left:585px;top:274px;width:1px;height:31px;background:#dcdcdc;"></div>
<div style="left:635px;top:274px;width:1px;height:31px;background:#dcdcdc;"></div>
<div style="left:685px;top:274px;width:1px;height:31px;background:#dcdcdc;"></div>
<div style="left:735px;top:274px;width:1px;height:31px;background:#dcdcdc;"></div>
<div style="left:785px;top:274px;width:1px;height:31px;background:#dcdcdc;"></div>
<div style="left:835px;top:274px;width:1px;height:31px;background:#dcdcdc;"></div>
<div style="left:955px;top:274px;width:1px;height:31px;background:#dcdcdc;"></div>
<div style="left:1075px;top:274px;width:1px;height:31px;background:#dcdcdc;"></div>
<div style="left:1149px;top:274px;width:1px;height:31px;background:#dcdcdc;"></div>
<div style="left:1209px;top:274px;width:1px;height:31px;background:#dcdcdc;"></div>
<div style="left:1286px;top:274px;width:1px;height:31px;background:#dcdcdc;"></div>
<div class="t" style="left:18px;top:277px;width:71px;text-align:right;"><a>9304312</a></div>
<div class="t" style="left:92px;top:277px;width:70px;text-align:right;">9304312</div>
<div class="t" style="left:166px;top:277px;width:65px;text-align:right;"><a>535</a></div>
<div class="t" style="left:242px;top:276px;">Musterkunde Filiale</div>
<div class="t" style="left:242px;top:289px;">Hammelburg</div>
<div class="t" style="left:365px;top:277px;width:66px;text-align:right;">24.03.2022</div>
<div style="left:453px;top:282px;width:14px;height:14px;background:#7f7f7f;border-radius:50%;"></div>
<div style="left:459px;top:292px;width:2px;height:1px;background:#9a9a9a;"></div>
<div style="left:503px;top:282px;width:14px;height:14px;background:#ffcc00;border-radius:50%;"></div>
<div style="left:553px;top:282px;width:14px;height:14px;background:#7f7f7f;border-radius:50%;"></div>
<div style="left:559px;top:292px;width:2px;height:1px;background:#9a9a9a;"></div>
<div style="left:603px;top:282px;width:14px;height:14px;background:#7f7f7f;border-radius:50%;"></div>
<div style="left:609px;top:292px;width:2px;height:1px;background:#9a9a9a;"></div>
<div style="left:653px;top:282px;width:14px;height:14px;background:#7f7f7f;border-radius:50%;"></div>
<div style="left:659px;top:292px;width:2px;height:1px;background:#9a9a9a;"></div>
<div style="left:703px;top:282px;width:14px;height:14px;background:#7f7f7f;border-radius:50%;"></div>
<div style="left:709px;top:292px;width:2px;height:1px;background:#9a9a9a;"></div>
<div style="left:753px;top:282px;width:14px;height:14px;background:#7f7f7f;border-radius:50%;"></div>
<div style="left:759px;top:292px;width:2px;height:1px;background:#9a9a9a;"></div>
<div style="left:803px;top:282px;width:14px;height:14px;background:#7f7f7f;border-radius:50%;"></div>
<div style="left:809px;top:292px;width:2px;height:1px;background:#9a9a9a;"></div>
<div class="t" style="left:842px;top:277px;">Kunze, Inge</div>
<div class="t" style="left:962px;top:277px;">Burgstätter</div>
<div class="t" style="left:1075px;top:277px;width:70px;text-align:right;">0,00</div>
<div class="t" style="left:1216px;top:277px;">Kopierer</div>
<div style="left:18px;top:306px;width:1215px;height:31px;background:#ebeef2;"></div>
<div style="left:0px;top:306px;width:18px;height:31px;background:#f4f4f4;"></div>
<div style="left:0px;top:337px;width:18px;height:1px;background:#bccbdf;"></div>
<div style="left:18px;top:306px;width:1px;height:31px;background:#dcdcdc;"></div>
<div style="left:18px;top:337px;width:1215px;height:1px;background:#dcdcdc;"></div>
<div style="left:92px;top:306px;width:1px;height:31px;background:#dcdcdc;"></div>
<div style="left:166px;top:306px;width:1px;height:31px;background:#dcdcdc;"></div>
<div style="left:235px;top:306px;width:1px;height:31px;background:#dcdcdc;"></div>
<div style="left:365px;top:306px;width:1px;height:31px;background:#dcdcdc;"></div>
<div style="left:435px;top:306px;width:1px;height:31px;background:#dcdcdc;"></div>
<div style="left:485px;top:306px;width:1px;height:31px;background:#dcdcdc;"></div>
<div style="left:535px;top:306px;width:1px;height:31px;background:#dcdcdc;"></div>
<div style="left:585px;top:306px;width:1px;height:31px;background:#dcdcdc;"></div>
<div style="left:635px;top:306px;width:1px;height:31px;background:#dcdcdc;"></div>
<div style="left:685px;top:306px;width:1px;height:31px;background:#dcdcdc;"></div>
<div style="left:735px;top:306px;width:1px;height:31px;background:#dcdcdc;"></div>
<div style="left:785px;top:306px;width:1px;height:31px;background:#dcdcdc;"></div>
<div style="left:835px;top:306px;width:1px;height:31px;background:#dcdcdc;"></div>
<div style="left:955px;top:306px;width:1px;height:31px;background:#dcdcdc;"></div>
<div style="left:1075px;top:306px;width:1px;height:31px;background:#dcdcdc;"></div>
<div style="left:1149px;top:306px;width:1px;height:31px;background:#dcdcdc;"></div>
<div style="left:1209px;top:306px;width:1px;height:31px;background:#dcdcdc;"></div>
<div style="left:1286px;top:306px;width:1px;height:31px;background:#dcdcdc;"></div>
<div class="t" style="left:18px;top:309px;width:71px;text-align:right;"><a>9304320</a></div>
<div class="t" style="left:92px;top:309px;width:70px;text-align:right;">9304320</div>
<div class="t" style="left:166px;top:309px;width:65px;text-align:right;"><a>535</a></div>
<div class="t" style="left:242px;top:308px;">Musterkunde Filiale</div>
<div class="t" style="left:242px;top:321px;">Hammelburg</div>
<div class="t" style="left:365px;top:309px;width:66px;text-align:right;">28.03.2022</div>
<div style="left:453px;top:314px;width:14px;height:14px;background:#7f7f7f;border-radius:50%;"></div>
<div style="left:459px;top:324px;width:2px;height:1px;background:#9a9a9a;"></div>
<div style="left:503px;top:314px;width:14px;height:14px;background:#ffcc00;border-radius:50%;"></div>
<div style="left:553px;top:314px;width:14px;height:14px;background:#7f7f7f;border-radius:50%;"></div>
<div style="left:559px;top:324px;width:2px;height:1px;background:#9a9a9a;"></div>
<div style="left:603px;top:314px;width:14px;height:14px;background:#7f7f7f;border-radius:50%;"></div>
<div style="left:609px;top:324px;width:2px;height:1px;background:#9a9a9a;"></div>
<div style="left:653px;top:314px;width:14px;height:14px;background:#7f7f7f;border-radius:50%;"></div>
<div style="left:659px;top:324px;width:2px;height:1px;background:#9a9a9a;"></div>
<div style="left:703px;top:314px;width:14px;height:14px;background:#7f7f7f;border-radius:50%;"></div>
<div style="left:709px;top:324px;width:2px;height:1px;background:#9a9a9a;"></div>
<div style="left:753px;top:314px;width:14px;height:14px;background:#7f7f7f;border-radius:50%;"></div>
<div style="left:759px;top:324px;width:2px;height:1px;background:#9a9a9a;"></div>
<div style="left:803px;top:314px;width:14px;height:14px;background:#7f7f7f;border-radius:50%;"></div>
<div style="left:809px;top:324px;width:2px;height:1px;background:#9a9a9a;"></div>
<div class="t" style="left:842px;top:309px;">Kunze, Inge</div>
<div class="t" style="left:962px;top:309px;">Burgstätter</div>
<div class="t" style="left:1075px;top:309px;width:70px;text-align:right;">0,00</div>
<div class="t" style="left:1216px;top:309px;">Kopierer</div>
<div style="left:18px;top:338px;width:1215px;height:31px;background:#e3eaf6;"></div>
<div style="left:0px;top:338px;width:18px;height:31px;background:#f4f4f4;"></div>
<div style="left:0px;top:369px;width:18px;height:1px;background:#bccbdf;"></div>
<div style="left:18px;top:338px;width:1px;height:31px;background:#dcdcdc;"></div>
<div style="left:18px;top:369px;width:1215px;height:1px;background:#dcdcdc;"></div>
<div style="left:92px;top:338px;width:1px;height:31px;background:#dcdcdc;"></div>
<div style="left:166px;top:338px;width:1px;height:31px;background:#dcdcdc;"></div>
<div style="left:235px;top:338px;width:1px;height:31px;background:#dcdcdc;"></div>
<div style="left:365px;top:338px;width:1px;height:31px;background:#dcdcdc;"></div>
<div style="left:435px;top:338px;width:1px;height:31px;background:#dcdcdc;"></div>
<div style="left:485px;top:338px;width:1px;height:31px;background:#dcdcdc;"></div>
<div style="left:535px;top:338px;width:1px;height:31px;background:#dcdcdc;"></div>
<div style="left:585px;top:338px;width:1px;height:31px;background:#dcdcdc;"></div>
<div style="left:635px;top:338px;width:1px;height:31px;background:#dcdcdc;"></div>
<div style="left:685px;top:338px;width:1px;height:31px;background:#dcdcdc;"></div>
<div style="left:735px;top:338px;width:1px;height:31px;background:#dcdcdc;"></div>
<div style="left:785px;top:338px;width:1px;height:31px;background:#dcdcdc;"></div>
<div style="left:835px;top:338px;width:1px;height:31px;background:#dcdcdc;"></div>
<div style="left:955px;top:338px;width:1px;height:31px;background:#dcdcdc;"></div>
<div style="left:1075px;top:338px;width:1px;height:31px;background:#dcdcdc;"></div>
<div style="left:1149px;top:338px;width:1px;height:31px;background:#dcdcdc;"></div>
<div style="left:1209px;top:338px;width:1px;height:31px;background:#dcdcdc;"></div>
<div style="left:1286px;top:338px;width:1px;height:31px;background:#dcdcdc;"></div>
<div class="t" style="left:18px;top:341px;width:71px;text-align:right;"><a>9304323</a></div>
<div class="t" style="left:92px;top:341px;width:70px;text-align:right;">9304323</div>
<div class="t" style="left:166px;top:341px;width:65px;text-align:right;"><a>535</a></div>
<div class="t" style="left:242px;top:340px;">Musterkunde Filiale</div>
<div class="t" style="left:242px;top:353px;">Hammelburg</div>
<div class="t" style="left:365px;top:341px;width:66px;text-align:right;">29.03.2022</div>
<div style="left:453px;top:346px;width:14px;height:14px;background:#7f7f7f;border-radius:50%;"></div>
<div style="left:459px;top:356px;width:2px;height:1px;background:#9a9a9a;"></div>
<div style="left:503px;top:346px;width:14px;height:14px;background:#ffcc00;border-radius:50%;"></div>
<div style="left:553px;top:346px;width:14px;height:14px;background:#7f7f7f;border-radius:50%;"></div>
<div style="left:559px;top:356px;width:2px;height:1px;background:#9a9a9a;"></div>
<div style="left:603px;top:346px;width:14px;height:14px;background:#7f7f7f;border-radius:50%;"></div>
<div style="left:609px;top:356px;width:2px;height:1px;background:#9a9a9a;"></div>
<div style="left:653px;top:346px;width:14px;height:14px;background:#7f7f7f;border-radius:50%;"></div>
<div style="left:659px;top:356px;width:2px;height:1px;background:#9a9a9a;"></div>
<div style="left:703px;top:346px;width:14px;height:14px;background:#7f7f7f;border-radius:50%;"></div>
<div style="left:709px;top:356px;width:2px;height:1px;background:#9a9a9a;"></div>
<div style="left:753px;top:346px;width:14px;height:14px;background:#7f7f7f;border-radius:50%;"></div>
<div style="left:759px;top:356px;width:2px;height:1px;background:#9a9a9a;"></div>
<div style="left:803px;top:346px;width:14px;height:14px;background:#7f7f7f;border-radius:50%;"></div>
<div style="left:809px;top:356px;width:2px;height:1px;background:#9a9a9a;"></div>
<div class="t" style="left:842px;top:341px;">Kunze, Inge</div>
<div class="t" style="left:962px;top:341px;">Burgstätter</div>
<div class="t" style="left:1075px;top:341px;width:70px;text-align:right;">90,86</div>
<div class="t" style="left:1216px;top:341px;">Kopierer</div>
<div style="left:18px;top:370px;width:1215px;height:31px;background:#ebeef2;"></div>
<div style="left:0px;top:370px;width:18px;height:31px;background:#f4f4f4;"></div>
<div style="left:0px;top:401px;width:18px;height:1px;background:#bccbdf;"></div>
<div style="left:18px;top:370px;width:1px;height:31px;background:#dcdcdc;"></div>
<div style="left:18px;top:401px;width:1215px;height:1px;background:#dcdcdc;"></div>
<div style="left:92px;top:370px;width:1px;height:31px;background:#dcdcdc;"></div>
<div style="left:166px;top:370px;width:1px;height:31px;background:#dcdcdc;"></div>
<div style="left:235px;top:370px;width:1px;height:31px;background:#dcdcdc;"></div>
<div style="left:365px;top:370px;width:1px;height:31px;background:#dcdcdc;"></div>
<div style="left:435px;top:370px;width:1px;height:31px;background:#dcdcdc;"></div>
<div style="left:485px;top:370px;width:1px;height:31px;background:#dcdcdc;"></div>
<div style="left:535px;top:370px;width:1px;height:31px;background:#dcdcdc;"></div>
<div style="left:585px;top:370px;width:1px;height:31px;background:#dcdcdc;"></div>
<div style="left:635px;top:370px;width:1px;height:31px;background:#dcdcdc;"></div>
<div style="left:685px;top:370px;width:1px;height:31px;background:#dcdcdc;"></div>
<div style="left:735px;top:370px;width:1px;height:31px;background:#dcdcdc;"></div>
<div style="left:785px;top:370px;width:1px;height:31px;background:#dcdcdc;"></div>
<div style="left:835px;top:370px;width:1px;height:31px;background:#dcdcdc;"></div>
<div style="left:955px;top:370px;width:1px;height:31px;background:#dcdcdc;"></div>
<div style="left:1075px;top:370px;width:1px;height:31px;background:#dcdcdc;"></div>
<div style="left:1149px;top:370px;width:1px;height:31px;background:#dcdcdc;"></div>
<div style="left:1209px;top:370px;width:1px;height:31px;background:#dcdcdc;"></div>
<div style="left:1286px;top:370px;width:1px;height:31px;background:#dcdcdc;"></div>
<div class="t" style="left:18px;top:373px;width:71px;text-align:right;"><a>9304335</a></div>
<div class="t" style="left:92px;top:373px;width:70px;text-align:right;">9304335</div>
<div class="t" style="left:166px;top:373px;width:65px;text-align:right;"><a>535</a></div>
<div class="t" style="left:242px;top:372px;">Musterkunde Filiale</div>
<div class="t" style="left:242px;top:385px;">Hammelburg</div>
<div class="t" style="left:365px;top:373px;width:66px;text-align:right;">30.03.2022</div>
<div style="left:453px;top:378px;width:14px;height:14px;background:#7f7f7f;border-radius:50%;"></div>
<div style="left:459px;top:388px;width:2px;height:1px;background:#9a9a9a;"></div>
<div style="left:503px;top:378px;width:14px;height:14px;background:#ffcc00;border-radius:50%;"></div>
<div style="left:553px;top:378px;width:14px;height:14px;background:#7f7f7f;border-radius:50%;"></div>
<div style="left:559px;top:388px;width:2px;height:1px;background:#9a9a9a;"></div>
<div style="left:603px;top:378px;width:14px;height:14px;background:#7f7f7f;border-radius:50%;"></div>
<div style="left:609px;top:388px;width:2px;height:1px;background:#9a9a9a;"></div>
<div style="left:653px;top:378px;width:14px;height:14px;background:#7f7f7f;border-radius:50%;"></div>
<div style="left:659px;top:388px;width:2px;height:1px;background:#9a9a9a;"></div>
<div style="left:703px;top:378px;width:14px;height:14px;background:#7f7f7f;border-radius:50%;"></div>
<div style="left:709px;top:388px;width:2px;height:1px;background:#9a9a9a;"></div>
<div style="left:753px;top:378px;width:14px;height:14px;background:#ff0000;border-radius:50%;"></div>
<div style="left:803px;top:378px;width:14px;height:14px;background:#7f7f7f;border-radius:50%;"></div>
<div style="left:809px;top:388px;width:2px;height:1px;background:#9a9a9a;"></div>
<div class="t" style="left:842px;top:373px;">Kunze, Inge</div>
<div class="t" style="left:962px;top:373px;">Burgstätter</div>
<div class="t" style="left:1075px;top:373px;width:70px;text-align:right;">713,55</div>
<div class="t" style="left:1216px;top:373px;">Kopierer</div>
</div>
<div style="left:1237px;top:137px;width:17px;height:397px;background:#fafafa;"></div>
<div style="left:1237px;top:137px;width:17px;height:17px;background:#fff;border:1px solid #e6e6e6;"></div>
<div style="left:1237px;top:154px;width:17px;height:53px;background:#fff;border:1px solid #e2e2e2;"></div>
<div style="left:1237px;top:517px;width:17px;height:17px;background:#fff;border:1px solid #e2e2e2;"></div>
<svg style="position:absolute;left:1242px;top:144px" width="7" height="4"><path d="M0 4H7L3.5 0Z" fill="#ababab"/></svg>
<svg style="position:absolute;left:1242px;top:524px" width="7" height="4"><path d="M0 0H7L3.5 4Z" fill="#ababab"/></svg>
<div style="left:4px;top:534px;width:1233px;height:17px;background:#fafafa;border-top:1px solid #e2e2e2;"></div>
<div style="left:4px;top:535px;width:17px;height:16px;background:#fff;border-bottom:1px solid #e6e6e6;"></div>
<div style="left:21px;top:535px;width:634px;height:16px;background:#fff;border-left:2px solid #e2e2e2;border-right:1px solid #e2e2e2;border-bottom:1px solid #e2e2e2;"></div>
<div style="left:1220px;top:535px;width:17px;height:16px;background:#fff;border:1px solid #e2e2e2;"></div>
<div style="left:1237px;top:534px;width:17px;height:17px;background:#efefef;"></div>
<svg style="position:absolute;left:10px;top:539px" width="4" height="7"><path d="M4 0V7L0 3.5Z" fill="#ababab"/></svg>
<svg style="position:absolute;left:1227px;top:539px" width="4" height="7"><path d="M0 0V7L4 3.5Z" fill="#ababab"/></svg>
<div style="left:0px;top:557px;width:111px;height:1px;background:#7ea6da;"></div>
<div style="left:112px;top:557px;width:144px;height:1px;background:#cfdff2;"></div>
<div style="left:257px;top:557px;width:1004px;height:1px;background:#7ea6da;"></div>
</body></html>
